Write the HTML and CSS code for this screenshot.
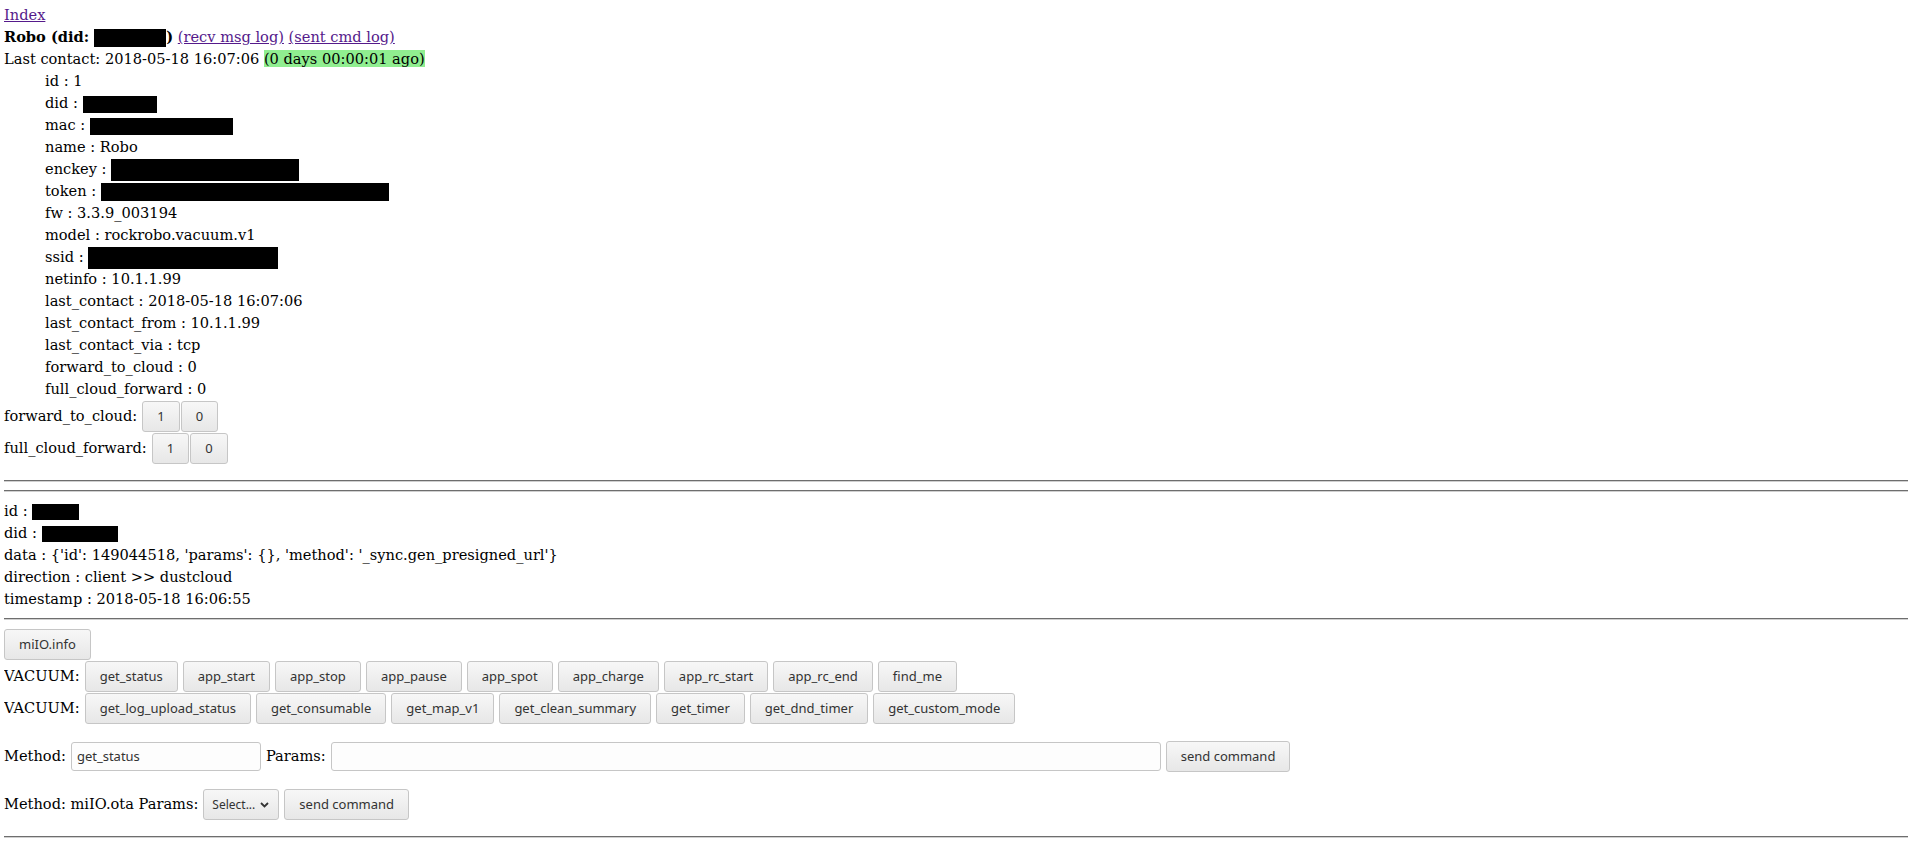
FILE: index.html
```html
<!DOCTYPE html>
<html lang="en">
<head>
    <meta charset="UTF-8">
    <title>Robo - dustcloud</title>
    <link rel="stylesheet" href="styles.css">
</head>
<body>

    <div class="line"><a href="#" class="link">Index</a></div>
    <div class="line">
        <b>Robo (did: <span class="redact r-head"></span>)</b>
        <a href="#" class="link">(recv msg log)</a>
        <a href="#" class="link">(sent cmd log)</a>
    </div>
    <div class="line">Last contact: 2018-05-18 16:07:06 <span class="ago">(0 days 00:00:01 ago)</span></div>

    <!-- device properties -->
    <ul class="props">
        <li class="line">id : 1</li>
        <li class="line">did : <span class="redact r-did"></span></li>
        <li class="line">mac : <span class="redact r-mac"></span></li>
        <li class="line">name : Robo</li>
        <li class="line">enckey : <span class="redact r-enckey"></span></li>
        <li class="line">token : <span class="redact r-token"></span></li>
        <li class="line">fw : 3.3.9_003194</li>
        <li class="line">model : rockrobo.vacuum.v1</li>
        <li class="line">ssid : <span class="redact r-ssid"></span></li>
        <li class="line">netinfo : 10.1.1.99</li>
        <li class="line">last_contact : 2018-05-18 16:07:06</li>
        <li class="line">last_contact_from : 10.1.1.99</li>
        <li class="line">last_contact_via : tcp</li>
        <li class="line">forward_to_cloud : 0</li>
        <li class="line">full_cloud_forward : 0</li>
    </ul>

    <div class="toggles">
        <div class="row">
            <span>forward_to_cloud:</span>
            <span class="pair">
                <button class="btn">1</button><button class="btn">0</button>
            </span>
        </div>
        <div class="row">
            <span>full_cloud_forward:</span>
            <span class="pair">
                <button class="btn">1</button><button class="btn">0</button>
            </span>
        </div>
    </div>

    <hr>
    <hr>

    <!-- last message -->
    <div class="message">
        <div class="line">id : <span class="redact r-msgid"></span></div>
        <div class="line">did : <span class="redact r-msgdid"></span></div>
        <div class="line">data : {'id': 149044518, 'params': {}, 'method': '_sync.gen_presigned_url'}</div>
        <div class="line">direction : client &gt;&gt; dustcloud</div>
        <div class="line">timestamp : 2018-05-18 16:06:55</div>
    </div>

    <hr>

    <div class="row">
        <button class="btn">miIO.info</button>
    </div>
    <div class="row">
        <span>VACUUM:</span>
        <button class="btn">get_status</button>
        <button class="btn">app_start</button>
        <button class="btn">app_stop</button>
        <button class="btn">app_pause</button>
        <button class="btn">app_spot</button>
        <button class="btn">app_charge</button>
        <button class="btn">app_rc_start</button>
        <button class="btn">app_rc_end</button>
        <button class="btn">find_me</button>
    </div>
    <div class="row">
        <span>VACUUM:</span>
        <button class="btn">get_log_upload_status</button>
        <button class="btn">get_consumable</button>
        <button class="btn">get_map_v1</button>
        <button class="btn">get_clean_summary</button>
        <button class="btn">get_timer</button>
        <button class="btn">get_dnd_timer</button>
        <button class="btn">get_custom_mode</button>
    </div>

    <form class="row method-row">
        <label>Method:</label>
        <input type="text" class="field method" value="get_status">
        <label>Params:</label>
        <input type="text" class="field params">
        <button type="button" class="btn">send command</button>
    </form>

    <form class="row ota-row">
        <label>Method: miIO.ota Params:</label>
        <span class="select-wrap">
            <select class="select">
                <option>Select...</option>
            </select>
            <svg class="chevron" width="9" height="6" viewBox="0 0 9 6">
                <path d="M1 1 L4.5 4.5 L8 1" fill="none" stroke="#333" stroke-width="1.8"/>
            </svg>
        </span>
        <button type="button" class="btn">send command</button>
    </form>

    <hr>

</body>
</html>
```

FILE: styles.css
```css
body {
    margin: 4px;
    font-family: "DejaVu Serif", serif;
    font-size: 14.6px;
    line-height: 22px;
    color: #000;
    background: #fff;
}
.line {
    height: 22px;
    white-space: nowrap;
}
.link {
    color: #551a8b;
    text-decoration: underline;
}
.ago {
    background: #90ee90;
}
.redact {
    display: inline-block;
    background: #000;
    vertical-align: middle;
}
.r-head {
    width: 72px;
    height: 18px;
}
.r-did {
    width: 74px;
    height: 17px;
}
.r-mac {
    width: 143px;
    height: 17px;
}
.r-enckey {
    width: 188px;
    height: 22px;
}
.r-token {
    width: 288px;
    height: 18px;
}
.r-ssid {
    width: 190px;
    height: 22px;
}
.r-msgid {
    width: 47px;
    height: 16px;
}
.r-msgdid {
    width: 76px;
    height: 16px;
}
.props {
    list-style: none;
    margin: 0;
    padding-left: 41px;
}
.toggles {
    margin-bottom: 16px;
}
.row {
    display: flex;
    align-items: center;
    gap: 5px;
    height: 32px;
}
.pair {
    display: flex;
    gap: 1px;
}
.btn {
    font-family: "Noto Sans", sans-serif;
    font-size: 13px;
    color: #333;
    height: 31px;
    padding: 0 14px;
    border: 1px solid #c6c6c6;
    border-radius: 3px;
    background: linear-gradient(#f7f7f7, #e7e7e7);
    cursor: pointer;
}
.btn:hover {
    background: #e2e2e2;
}
hr {
    margin: 8px 0;
    border: none;
    border-top: 1px solid #6e6e6e;
    border-bottom: 1px solid #d0d0d0;
    height: 0;
}
.method-row {
    margin: 16px 0 0;
}
.ota-row {
    margin: 16px 0;
}
.field {
    font-family: "Noto Sans", sans-serif;
    font-size: 13px;
    color: #333;
    height: 29px;
    box-sizing: border-box;
    padding: 0 5px;
    border: 1px solid #c6c6c6;
    border-radius: 3px;
    background: #fdfdfd;
}
.method {
    width: 190px;
}
.params {
    width: 830px;
}
.select-wrap {
    position: relative;
    display: inline-flex;
}
.select {
    appearance: none;
    -webkit-appearance: none;
    font-family: "Noto Sans", sans-serif;
    font-size: 12px;
    color: #333;
    width: 76px;
    height: 31px;
    padding: 0 0 0 8px;
    border: 1px solid #c6c6c6;
    border-radius: 3px;
    background: linear-gradient(#f7f7f7, #e7e7e7);
}
.chevron {
    position: absolute;
    right: 10px;
    top: 13px;
    pointer-events: none;
}
```
